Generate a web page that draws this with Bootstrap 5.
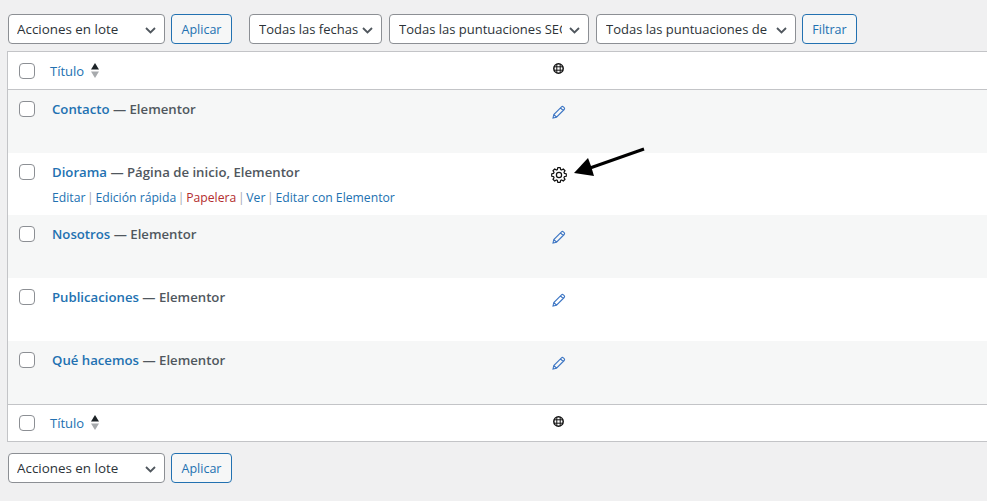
<!DOCTYPE html>
<html lang="es">
<head>
    <meta charset="UTF-8">
    <meta name="viewport" content="width=device-width, initial-scale=1.0">
    <title>Páginas</title>
    <link href="https://cdn.jsdelivr.net/npm/bootstrap@5.3.2/dist/css/bootstrap.min.css" rel="stylesheet">
    <style>
        body {
            background-color: #f0f0f1;
            font-family: "Open Sans", "Noto Sans", sans-serif;
            font-size: 13px;
            color: #50575e;
            position: relative;
        }
        .wp-wrap {
            padding: 14px 0 0 8px;
        }
        .wp-select {
            height: 30px;
            border: 1px solid #8c8f94;
            border-radius: 4px;
            padding: 1px 26px 0 8px;
            font-family: inherit;
            font-size: 13px;
            color: #2c3338;
            background: #fff url("data:image/svg+xml,%3Csvg xmlns='http://www.w3.org/2000/svg' width='11' height='7'%3E%3Cpath d='M1 1l4.500 4.500L10 1' fill='none' stroke='%2350575e' stroke-width='1.800'/%3E%3C/svg%3E") no-repeat right 8px top 12px;
            appearance: none;
        }
        .sel-bulk { width: 157px; font-size: 13.4px; }
        .sel-date { width: 133px; padding-left: 9px; padding-right: 12px; margin-left: 17px; }
        .sel-seo { width: 200px; padding-left: 9px; margin-left: 7px; }
        .wp-btn {
            height: 30px;
            border: 1px solid #2271b1;
            border-radius: 4px;
            background: #f6f7f7;
            color: #2271b1;
            font-size: 12.5px;
            padding: 2px 0 0 0;
            margin-left: 6px;
        }
        .btn-apply { width: 61px; }
        .btn-filter { width: 55px; }
        .wp-table {
            margin: 7px 0 0 -1px;
            table-layout: fixed;
            width: 980px;
            border: 1px solid #c3c4c7;
            border-right: 0;
            border-collapse: separate;
            border-spacing: 0;
            background: #fff;
        }
        .wp-table th, .wp-table td {
            padding: 0;
            border: 0;
            vertical-align: top;
            background: transparent;
            box-shadow: none;
            font-weight: 400;
            color: #50575e;
        }
        .col-cb { width: 44px; }
        .col-title { width: 485px; }
        .wp-table thead th {
            height: 38px;
            border-bottom: 1px solid #c3c4c7;
        }
        .wp-table tfoot th {
            height: 37px;
            border-top: 1px solid #c3c4c7;
        }
        .wp-table tbody tr { height: 63px; }
        .wp-table tbody tr.row-short { height: 62px; }
        .wp-table tbody tr.row-alt td { background: #f6f7f7; }
        .wp-check {
            display: block;
            width: 16px;
            height: 16px;
            margin: 11px 0 0 11px;
            border: 1px solid #8c8f94;
            border-radius: 4px;
            background: #fff;
            appearance: none;
        }
        tfoot .wp-check { margin-top: 10px; }
        .head-link {
            color: #2271b1;
            text-decoration: none;
            display: inline-flex;
            gap: 7px;
            margin: 10px 0 0 -2px;
        }
        tfoot .head-link { margin-top: 9px; }
        .sort-icon { margin-top: 1px; }
        .row-title {
            padding: 9px 0 0 0;
            font-weight: 600;
            font-size: 13.2px;
            line-height: 20px;
        }
        .row-title a {
            color: #2271b1;
            text-decoration: none;
        }
        .row-links {
            font-size: 12.2px;
            line-height: 18px;
            margin-top: 7px;
            color: #a7aaad;
        }
        .row-links a {
            color: #2271b1;
            text-decoration: none;
        }
        .row-links a.trash { color: #b32d2e; }
        .row-links .sep { margin: 0 -1.5px; }
        .globe-icon { display: block; margin: 11px 0 0 16px; }
        .pencil-icon { display: block; margin: 15px 0 0 15px; }
        .gear-icon { display: block; margin: 14px 0 0 14px; }
        .arrow-mark {
            position: absolute;
            left: 570px;
            top: 144px;
        }
        .bottom-bar { margin-top: 11px; }
    </style>
</head>
<body>

<div class="wp-wrap">
    <div class="d-flex align-items-center">
        <select class="wp-select sel-bulk"><option>Acciones en lote</option></select>
        <button type="button" class="wp-btn btn-apply">Aplicar</button>
        <select class="wp-select sel-date"><option>Todas las fechas</option></select>
        <select class="wp-select sel-seo"><option>Todas las puntuaciones SEO</option></select>
        <select class="wp-select sel-seo"><option>Todas las puntuaciones de</option></select>
        <button type="button" class="wp-btn btn-filter">Filtrar</button>
    </div>

    <table class="table wp-table">
        <colgroup>
            <col class="col-cb">
            <col class="col-title">
            <col>
        </colgroup>
        <thead>
            <tr>
                <th><input type="checkbox" class="wp-check"></th>
                <th>
                    <a href="#" class="head-link">Título
                        <svg class="sort-icon" width="8" height="15" viewBox="0 0 8 15"><path d="M4 0l4 6.500H0z" fill="#1d2327"/><path d="M0 8.500h8l-4 6.500z" fill="#a7aaad"/></svg>
                    </a>
                </th>
                <th>
                    <svg class="globe-icon" width="11" height="11" viewBox="0 0 11 11"><circle cx="5.500" cy="5.500" r="4.700" fill="none" stroke="#111" stroke-width="1.500"/><path d="M1 3.800h9M1 7.200h9M3.800 1v9M7.200 1v9" stroke="#111" stroke-width="1"/></svg>
                </th>
            </tr>
        </thead>
        <tbody id="rows"></tbody>
        <tfoot>
            <tr>
                <th><input type="checkbox" class="wp-check"></th>
                <th>
                    <a href="#" class="head-link">Título
                        <svg class="sort-icon" width="8" height="15" viewBox="0 0 8 15"><path d="M4 0l4 6.500H0z" fill="#1d2327"/><path d="M0 8.500h8l-4 6.500z" fill="#a7aaad"/></svg>
                    </a>
                </th>
                <th>
                    <svg class="globe-icon" width="11" height="11" viewBox="0 0 11 11"><circle cx="5.500" cy="5.500" r="4.700" fill="none" stroke="#111" stroke-width="1.500"/><path d="M1 3.800h9M1 7.200h9M3.800 1v9M7.200 1v9" stroke="#111" stroke-width="1"/></svg>
                </th>
            </tr>
        </tfoot>
    </table>

    <div class="d-flex align-items-center bottom-bar">
        <select class="wp-select sel-bulk"><option>Acciones en lote</option></select>
        <button type="button" class="wp-btn btn-apply">Aplicar</button>
    </div>
</div>

<svg class="arrow-mark" width="80" height="40" viewBox="0 0 80 40">
    <path d="M74 5L20 24" stroke="#000" stroke-width="3" fill="none"/>
    <path d="M4 29L18 14l3 8 3 10z" fill="#000"/>
</svg>

<script>
    // gear outline, 8 teeth
    function gearPath() {
        let d = "";
        for (let i = 0; i < 8; i++) {
            const a = i * Math.PI / 4;
            const pts = [[-0.30, 5.6], [-0.17, 7.4], [0.17, 7.4], [0.30, 5.6]];
            for (let j = 0; j < pts.length; j++) {
                const x = 8 + pts[j][1] * Math.sin(a + pts[j][0]);
                const y = 8 - pts[j][1] * Math.cos(a + pts[j][0]);
                d += (d === "" ? "M" : "L") + x.toFixed(2) + " " + y.toFixed(2);
            }
        }
        return d + "Z";
    }
    const pencil = '<svg class="pencil-icon" width="14" height="14" viewBox="0 0 14 14"><path d="M1 13l.8-3.500L9.500 1.800a1.300 1.300 0 0 1 1.800 0l.9.9a1.300 1.300 0 0 1 0 1.800L4.500 12.200z M8.500 2.800l2.700 2.700 M1.800 9.500l2.700 2.700" fill="none" stroke="#3d76c4" stroke-width="1.100"/></svg>';
    const gear = '<svg class="gear-icon" width="16" height="16" viewBox="0 0 16 16"><path d="' + gearPath() + '" fill="none" stroke="#111" stroke-width="1.200" stroke-linejoin="round"/><circle cx="8" cy="8" r="2.600" fill="none" stroke="#111" stroke-width="1.200"/></svg>';
    const pages = [
        { title: "Contacto", state: "Elementor", icon: pencil },
        { title: "Diorama", state: "Página de inicio, Elementor", icon: gear, links: true },
        { title: "Nosotros", state: "Elementor", icon: pencil },
        { title: "Publicaciones", state: "Elementor", icon: pencil },
        { title: "Qué hacemos", state: "Elementor", icon: pencil }
    ];
    const sep = ' <span class="sep">|</span> ';
    const actions = '<div class="row-links"><a href="#">Editar</a>' + sep + '<a href="#">Edición rápida</a>' + sep + '<a href="#" class="trash">Papelera</a>' + sep + '<a href="#">Ver</a>' + sep + '<a href="#">Editar con Elementor</a></div>';
    let html = "";
    for (let i = 0; i < pages.length; i++) {
        const p = pages[i];
        let cls = i % 2 === 0 ? "row-alt" : "";
        if (i === 1) cls += " row-short";
        html += '<tr class="' + cls + '">'
            + '<td><input type="checkbox" class="wp-check"></td>'
            + '<td><div class="row-title"><a href="#">' + p.title + '</a> — ' + p.state + '</div>' + (p.links ? actions : "") + '</td>'
            + '<td>' + p.icon + '</td></tr>';
    }
    document.getElementById("rows").innerHTML = html;
</script>
<script src="https://cdn.jsdelivr.net/npm/bootstrap@5.3.2/dist/js/bootstrap.bundle.min.js"></script>
</body>
</html>
